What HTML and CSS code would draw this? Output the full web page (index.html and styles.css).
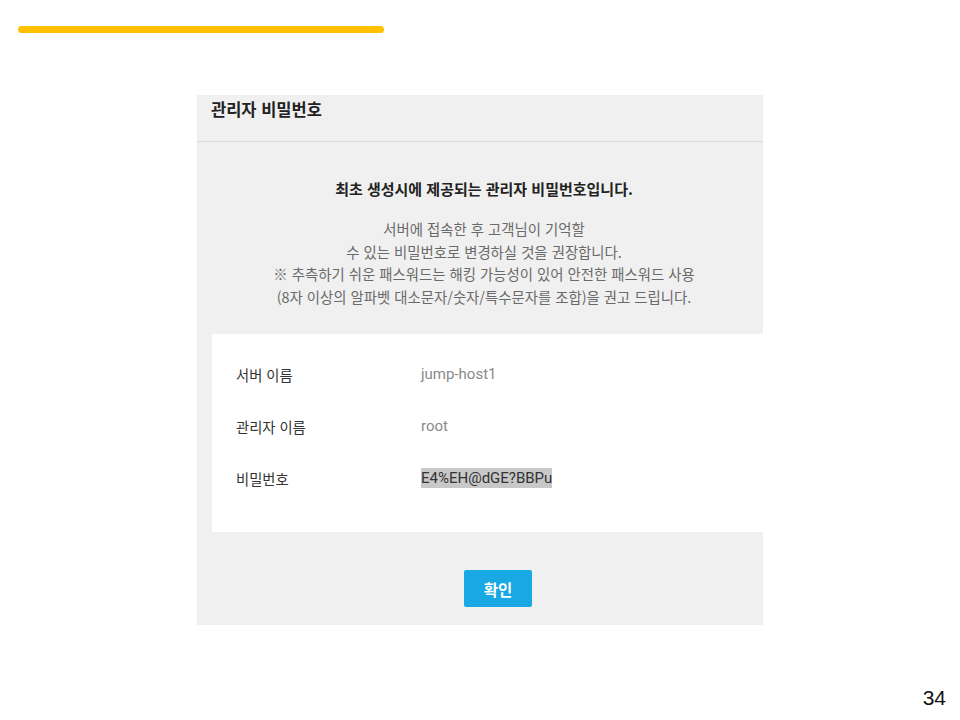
FILE: index.html
```html
<!DOCTYPE html>
<html lang="ko">
<head>
    <meta charset="UTF-8">
    <meta name="viewport" content="width=device-width, initial-scale=1.0">
    <title>관리자 비밀번호</title>
    <link rel="stylesheet" href="styles.css">
</head>
<body>
    <div class="slide">
        <div class="accent-bar"></div>

        <div class="panel">
            <div class="panel-header">
                <h2>관리자 비밀번호</h2>
            </div>

            <div class="panel-body">
                <p class="notice">최초 생성시에 제공되는 관리자 비밀번호입니다.</p>
                <p class="guide">
                    서버에 접속한 후 고객님이 기억할<br>
                    수 있는 비밀번호로 변경하실 것을 권장합니다.<br>
                    ※ 추측하기 쉬운 패스워드는 해킹 가능성이 있어 안전한 패스워드 사용<br>
                    (8자 이상의 알파벳 대소문자/숫자/특수문자를 조합)을 권고 드립니다.
                </p>

                <!-- server info -->
                <div class="info-box">
                    <div class="info-row">
                        <span class="info-label">서버 이름</span>
                        <span class="info-value">jump-host1</span>
                    </div>
                    <div class="info-row">
                        <span class="info-label">관리자 이름</span>
                        <span class="info-value">root</span>
                    </div>
                    <div class="info-row">
                        <span class="info-label">비밀번호</span>
                        <span class="info-value"><span class="password">E4%EH@dGE?BBPu</span></span>
                    </div>
                </div>

                <div class="actions">
                    <button type="button" class="btn-confirm">확인</button>
                </div>
            </div>
        </div>

        <div class="page-number">34</div>
    </div>
</body>
</html>
```

FILE: styles.css
```css
body {
    margin: 0;
    padding: 0;
    background-color: #fff;
    font-family: "Noto Sans CJK KR", "Noto Sans", sans-serif;
}
.slide {
    width: 960px;
    height: 720px;
    display: flex;
    flex-direction: column;
}
.accent-bar {
    margin: 26px 0 0 18px;
    width: 366px;
    height: 7px;
    border-radius: 4px;
    background-color: #ffc000;
}
.panel {
    margin: 62px 0 0 197px;
    width: 566px;
    height: 530px;
    background-color: #f0f0f0;
    overflow: hidden;
}
.panel-header {
    height: 46px;
    border-bottom: 1px solid #dcdcdc;
    padding-left: 14px;
}
.panel-header h2 {
    margin: 0;
    padding-top: 3px;
    font-size: 16.5px;
    line-height: 22px;
    font-weight: bold;
    color: #222;
}
.panel-body {
    text-align: center;
}
.notice {
    margin: 0;
    padding-top: 37px;
    padding-left: 8px;
    font-size: 15px;
    line-height: 19px;
    font-weight: bold;
    color: #222;
}
.guide {
    margin: 20px 0 0;
    padding-left: 8px;
    font-size: 14.4px;
    line-height: 22.5px;
    color: #6a6a6a;
}
.info-box {
    margin: 26px 0 0 15px;
    padding: 14px 24px 28px;
    background-color: #fff;
    text-align: left;
}
.info-row {
    display: flex;
    align-items: center;
    height: 52px;
}
.info-label {
    width: 185px;
    font-size: 14.3px;
    color: #333;
}
.info-value {
    font-family: Roboto, "Noto Sans", sans-serif;
    font-size: 15px;
    color: #8a8a8a;
}
.password {
    padding: 1px 0;
    background-color: #c8c8c8;
    color: #333;
}
.actions {
    margin-top: 38px;
    padding-left: 36px;
}
.btn-confirm {
    width: 68px;
    height: 37px;
    border: none;
    border-radius: 2px;
    background-color: #18a9e4;
    color: #fff;
    font-family: "Noto Sans CJK KR", sans-serif;
    font-size: 15.5px;
    font-weight: bold;
    cursor: pointer;
}
.page-number {
    margin-top: 61px;
    padding-right: 14px;
    text-align: right;
    font-family: "Liberation Sans", Arial, sans-serif;
    font-size: 21px;
    line-height: 24px;
    color: #111;
}
```
